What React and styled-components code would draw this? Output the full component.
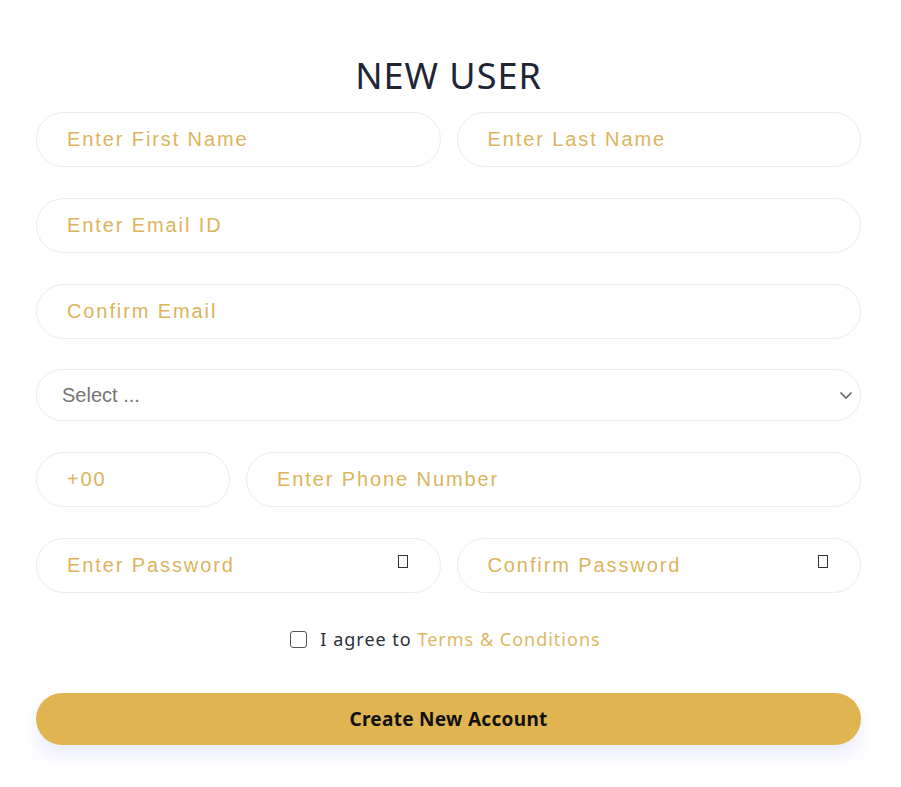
import React from 'react';
import styled, { createGlobalStyle } from 'styled-components';

const GlobalStyle = createGlobalStyle`
  body {
    margin: 0;
    background: #ffffff;
    font-family: 'Noto Sans', sans-serif;
  }
`;

const Page = styled.div`
  padding: 52px 40px 40px 36px;
`;

const Form = styled.form`
  display: flex;
  flex-direction: column;
  gap: 31px;
`;

const Title = styled.h1`
  margin: 0 0 -19px;
  text-align: center;
  font-family: 'Noto Sans', sans-serif;
  font-weight: 400;
  font-size: 36px;
  letter-spacing: 1px;
  line-height: 48px;
  color: #1e2535;
`;

const Row = styled.div`
  display: grid;
  grid-template-columns: ${p => p.$cols || '1fr'};
  gap: 16px;
`;

const FieldWrap = styled.div`
  position: relative;
`;

const Input = styled.input`
  box-sizing: border-box;
  width: 100%;
  height: 55px;
  border: 1px solid #ececec;
  border-radius: 30px;
  padding: 0 30px;
  font-family: 'Liberation Sans', Arial, sans-serif;
  font-size: 20px;
  letter-spacing: 1.9px;
  color: #333;
  background: #fff;
  outline: none;
  &::placeholder {
    color: #dcb45c;
  }
`;

const Tofu = styled.span`
  position: absolute;
  right: 33px;
  top: 50%;
  width: 10px;
  height: 13px;
  margin-top: -11px;
  border: 1px solid #333;
  box-sizing: border-box;
`;

const SelectBox = styled.div`
  box-sizing: border-box;
  height: 52px;
  margin-top: -1px;
  border: 1px solid #ececec;
  border-radius: 30px;
  padding: 0 25px;
  display: flex;
  align-items: center;
  justify-content: space-between;
  font-family: 'Liberation Sans', Arial, sans-serif;
  font-size: 20px;
  color: #757575;
`;

const Chevron = styled.svg`
  margin-right: -18px;
`;

const Agree = styled.label`
  display: flex;
  align-items: center;
  justify-content: center;
  gap: 13px;
  margin-top: 3px;
  padding-right: 6px;
  font-family: 'Noto Sans', sans-serif;
  font-size: 18px;
  letter-spacing: 1px;
  color: #2b2f38;
`;

const Check = styled.span`
  box-sizing: border-box;
  width: 17px;
  height: 17px;
  border: 1.5px solid #555;
  border-radius: 3px;
`;

const TermsLink = styled.a`
  color: #dcb865;
  text-decoration: none;
`;

const Button = styled.button`
  margin-top: 11px;
  height: 52px;
  border: none;
  border-radius: 30px;
  background: #e0b450;
  font-family: 'Noto Sans', sans-serif;
  font-weight: 700;
  font-size: 19px;
  letter-spacing: 0.3px;
  color: #111;
  box-shadow: 0 10px 20px rgba(110, 120, 255, 0.15);
`;

export default function App() {
  return (
    <Page>
      <GlobalStyle />
      <Form onSubmit={e => e.preventDefault()}>
        <Title>NEW USER</Title>
        <Row $cols="1fr 1fr">
          <Input placeholder="Enter First Name" />
          <Input placeholder="Enter Last Name" />
        </Row>
        <Input placeholder="Enter Email ID" />
        <Input placeholder="Confirm Email" />
        <SelectBox>
          <span>Select ...</span>
          <Chevron width="14" height="9" viewBox="0 0 14 9">
            <path d="M1.5 1.5 L7 7 L12.5 1.5" fill="none" stroke="#666" strokeWidth="1.6" />
          </Chevron>
        </SelectBox>
        <Row $cols="194px 1fr">
          <Input placeholder="+00" />
          <Input placeholder="Enter Phone Number" />
        </Row>
        <Row $cols="1fr 1fr">
          <FieldWrap>
            <Input type="password" placeholder="Enter Password" />
            <Tofu />
          </FieldWrap>
          <FieldWrap>
            <Input type="password" placeholder="Confirm Password" />
            <Tofu />
          </FieldWrap>
        </Row>
        <Agree>
          <Check />
          <span>
            I agree to <TermsLink href="#">Terms &amp; Conditions</TermsLink>
          </span>
        </Agree>
        <Button type="submit">Create New Account</Button>
      </Form>
    </Page>
  );
}
